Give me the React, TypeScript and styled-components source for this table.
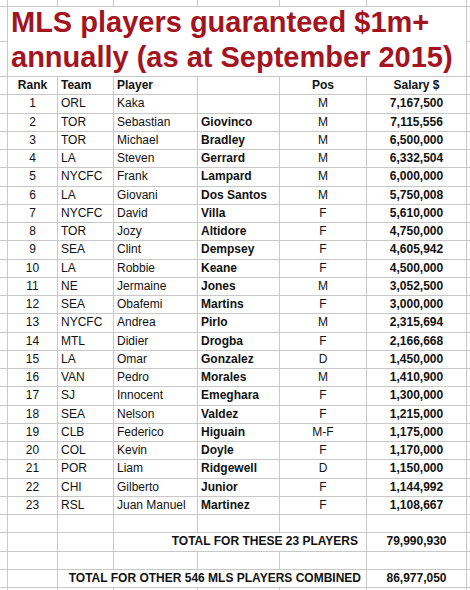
import styled, { createGlobalStyle } from "styled-components";
import React from "react";

type Player = [string, string, string, string, string, string];

const players: Player[] = [
  ["1", "ORL", "Kaka", "", "M", "7,167,500"],
  ["2", "TOR", "Sebastian", "Giovinco", "M", "7,115,556"],
  ["3", "TOR", "Michael", "Bradley", "M", "6,500,000"],
  ["4", "LA", "Steven", "Gerrard", "M", "6,332,504"],
  ["5", "NYCFC", "Frank", "Lampard", "M", "6,000,000"],
  ["6", "LA", "Giovani", "Dos Santos", "M", "5,750,008"],
  ["7", "NYCFC", "David", "Villa", "F", "5,610,000"],
  ["8", "TOR", "Jozy", "Altidore", "F", "4,750,000"],
  ["9", "SEA", "Clint", "Dempsey", "F", "4,605,942"],
  ["10", "LA", "Robbie", "Keane", "F", "4,500,000"],
  ["11", "NE", "Jermaine", "Jones", "M", "3,052,500"],
  ["12", "SEA", "Obafemi", "Martins", "F", "3,000,000"],
  ["13", "NYCFC", "Andrea", "Pirlo", "M", "2,315,694"],
  ["14", "MTL", "Didier", "Drogba", "F", "2,166,668"],
  ["15", "LA", "Omar", "Gonzalez", "D", "1,450,000"],
  ["16", "VAN", "Pedro", "Morales", "M", "1,410,900"],
  ["17", "SJ", "Innocent", "Emeghara", "F", "1,300,000"],
  ["18", "SEA", "Nelson", "Valdez", "F", "1,215,000"],
  ["19", "CLB", "Federico", "Higuain", "M-F", "1,175,000"],
  ["20", "COL", "Kevin", "Doyle", "F", "1,170,000"],
  ["21", "POR", "Liam", "Ridgewell", "D", "1,150,000"],
  ["22", "CHI", "Gilberto", "Junior", "F", "1,144,992"],
  ["23", "RSL", "Juan Manuel", "Martinez", "F", "1,108,667"],
];

const GlobalStyle = createGlobalStyle`
  html, body {
    margin: 0;
    padding: 0;
    background: #ffffff;
    overflow: hidden;
  }
`;

const Sheet = styled.div`
  display: grid;
  grid-template-columns: 8px 50px 56px 84px 82px 87px 100px 1fr;
  grid-template-rows: 7px 35px 35px;
  grid-auto-rows: 18.25px;
  width: 470px;
  height: 590px;
  overflow: hidden;
  font-family: "Liberation Sans", Arial, sans-serif;
  font-size: 12px;
  color: #111;
`;

const Cell = styled.div<{ $align?: "left" | "center" | "right"; $bold?: boolean; $span?: number; $pad?: number }>`
  box-sizing: border-box;
  border-right: 1px solid #c8c8c8;
  border-bottom: 1px solid #c8c8c8;
  padding: 0 ${(p) => p.$pad ?? 3}px 0 3px;
  line-height: 16px;
  white-space: nowrap;
  overflow: hidden;
  text-align: ${(p) => p.$align ?? "left"};
  font-weight: ${(p) => (p.$bold ? 700 : 400)};
  grid-column: span ${(p) => p.$span ?? 1};
`;

const Title = styled.div`
  box-sizing: border-box;
  grid-column: span 6;
  grid-row: span 2;
  border-right: 1px solid #c8c8c8;
  border-bottom: 1px solid #c8c8c8;
  display: flex;
  flex-direction: column;
  justify-content: flex-end;
  padding: 0 0 1px 3px;
  font-size: 29px;
  line-height: 35px;
  font-weight: 700;
  color: #a3141f;
  white-space: nowrap;
`;

function EmptyRow() {
  return (
    <>
      {Array.from({ length: 8 }).map((_, i) => (
        <Cell key={i} />
      ))}
    </>
  );
}

export default function App() {
  return (
    <>
      <GlobalStyle />
      <Sheet>
        <EmptyRow />

        <Cell />
        <Title>
          <span>MLS players guaranteed $1m+</span>
          <span>annually (as at September 2015)</span>
        </Title>
        <Cell />
        <Cell />
        <Cell />

        <Cell />
        <Cell $align="center" $bold>Rank</Cell>
        <Cell $bold>Team</Cell>
        <Cell $bold>Player</Cell>
        <Cell />
        <Cell $align="center" $bold>Pos</Cell>
        <Cell $align="center" $bold>Salary $</Cell>
        <Cell />

        {players.map(([rank, team, first, last, pos, salary]) => (
          <React.Fragment key={rank}>
            <Cell />
            <Cell $align="center">{rank}</Cell>
            <Cell>{team}</Cell>
            <Cell>{first}</Cell>
            <Cell $bold>{last}</Cell>
            <Cell $align="center">{pos}</Cell>
            <Cell $align="center" $bold>{salary}</Cell>
            <Cell />
          </React.Fragment>
        ))}

        <EmptyRow />
        <Cell />
        <Cell />
        <Cell />
        <Cell $span={3} $align="right" $bold $pad={8}>TOTAL FOR THESE 23 PLAYERS</Cell>
        <Cell $align="center" $bold>79,990,930</Cell>
        <Cell />

        <EmptyRow />
        <Cell />
        <Cell />
        <Cell $span={4} $align="right" $bold $pad={5}>TOTAL FOR OTHER 546 MLS PLAYERS COMBINED</Cell>
        <Cell $align="center" $bold>86,977,050</Cell>
        <Cell />

        <EmptyRow />
      </Sheet>
    </>
  );
}
